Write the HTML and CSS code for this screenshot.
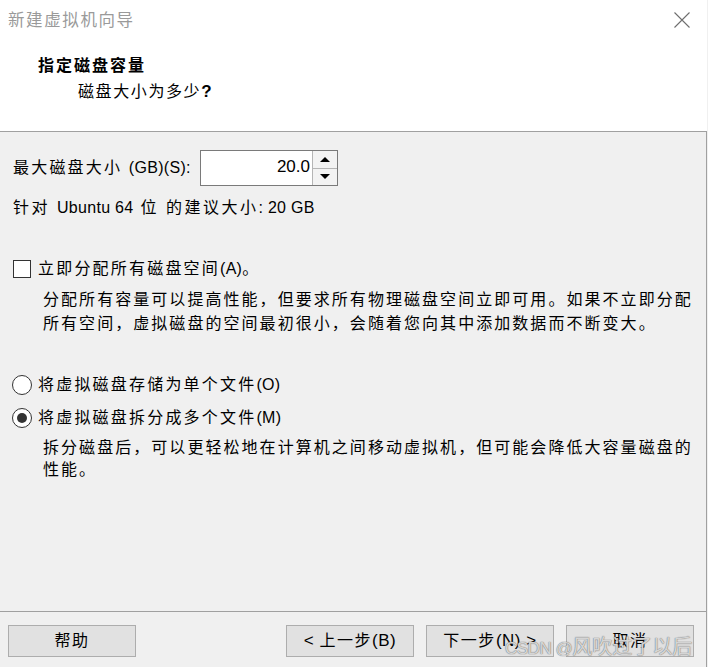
FILE: index.html
```html
<!DOCTYPE html>
<html lang="zh-CN">
<head>
<meta charset="utf-8">
<title>新建虚拟机向导</title>
<link rel="stylesheet" href="styles.css">
</head>
<body>
<div class="window">
  <header class="head">
    <div class="titlebar">
      <span class="title">新建虚拟机向导</span>
      <svg class="close" width="16" height="16" viewBox="0 0 16 16"><path d="M0.5 0.5 L15.5 15.5 M15.5 0.5 L0.5 15.5" stroke="#6e6e6e" stroke-width="1.1" fill="none"/></svg>
    </div>
    <div class="h1">指定磁盘容量</div>
    <div class="h2">磁盘大小为多少<span class="en">?</span></div>
  </header>

  <main class="content">
    <div class="size-row">
      <span class="label">最大磁盘大小 <span class="en">(GB)(S):</span></span>
      <div class="spin">
        <div class="spin-value">20.0</div>
        <div class="spin-btns">
          <div class="spin-btn"><span class="tri-up"></span></div>
          <div class="spin-btn"><span class="tri-down"></span></div>
        </div>
      </div>
    </div>
    <div class="rec">针对 <span class="en">Ubuntu 64</span> 位 的建议大小<span class="en">: 20 GB</span></div>

    <div class="opt check-opt">
      <span class="checkbox"></span>
      <span class="opt-text">立即分配所有磁盘空间<span class="en">(A)</span>。</span>
    </div>
    <p class="desc desc-a">分配所有容量可以提高性能，但要求所有物理磁盘空间立即可用。如果不立即分配<br>所有空间，虚拟磁盘的空间最初很小，会随着您向其中添加数据而不断变大。</p>

    <div class="opt radio-opt first">
      <span class="radio"></span>
      <span class="opt-text">将虚拟磁盘存储为单个文件<span class="en">(O)</span></span>
    </div>
    <div class="opt radio-opt second">
      <span class="radio checked"></span>
      <span class="opt-text">将虚拟磁盘拆分成多个文件<span class="en">(M)</span></span>
    </div>
    <p class="desc desc-b">拆分磁盘后，可以更轻松地在计算机之间移动虚拟机，但可能会降低大容量磁盘的<br>性能。</p>
  </main>

  <footer class="foot">
    <button class="btn"><span class="btn-label">帮助</span></button>
    <div class="nav">
      <button class="btn"><span class="btn-label"><span class="en">&lt; </span>上一步<span class="en">(B)</span></span></button>
      <button class="btn"><span class="btn-label">下一步<span class="en">(N) &gt;</span></span></button>
      <button class="btn"><span class="btn-label">取消</span></button>
    </div>
  </footer>

  <div class="watermark"><span class="wm-en">CSDN @</span>风吹过了以后</div>
</div>
</body>
</html>
```

FILE: styles.css
```css
* { box-sizing: border-box; }

html, body {
  margin: 0;
  padding: 0;
}

body {
  width: 708px;
  height: 667px;
  overflow: hidden;
  background: #f0f0f0;
  font-family: "Liberation Sans", "Noto Sans CJK SC", sans-serif;
  font-size: 16px;
  letter-spacing: 2.2px;
  color: #000;
}

.en {
  letter-spacing: 0.3px;
  font-size: 16px;
}

.window {
  position: relative;
  width: 707px;
  height: 667px;
  display: flex;
  flex-direction: column;
}

/* ---------- header ---------- */
.head {
  background: #fff;
  height: 132px;
  border-bottom: 1px solid #a0a0a0;
  flex: none;
}

.titlebar {
  height: 40px;
  display: flex;
  align-items: center;
  justify-content: space-between;
  padding: 0 17px 0 8px;
}

.title {
  color: #9a9a9a;
  line-height: 20px;
  font-size: 16.5px;
  letter-spacing: 1.6px;
}

.close { display: block; }

.h1 {
  margin-top: 16px;
  padding-left: 38px;
  line-height: 20px;
  font-weight: 700;
  letter-spacing: 2px;
}

.h2 {
  margin-top: 6px;
  padding-left: 78px;
  line-height: 20px;
  letter-spacing: 1.6px;
}

.h2 .en { font-size: 17px; font-weight: 700; }

/* ---------- content ---------- */
.content {
  flex: 1;
  border-right: 1px solid #a0a0a0;
  padding-left: 13px;
  display: flex;
  flex-direction: column;
}

.size-row {
  margin-top: 18px;
  width: 325px;
  height: 36px;
  display: flex;
  align-items: center;
  justify-content: space-between;
}

.label { line-height: 20px; }

.spin {
  width: 138px;
  height: 36px;
  display: flex;
  border: 1px solid #7a7a7a;
  background: #fff;
}

.spin-value {
  flex: 1;
  text-align: right;
  padding-right: 2px;
  font-size: 17px;
  letter-spacing: 0;
  line-height: 32px;
}

.spin-btns {
  width: 25px;
  display: flex;
  flex-direction: column;
  border-left: 1px solid #b5b5b5;
}

.spin-btn {
  flex: 1;
  display: flex;
  align-items: center;
  justify-content: center;
  background: #f3f3f3;
}

.spin-btn + .spin-btn { border-top: 1px solid #b5b5b5; }

.tri-up, .tri-down {
  width: 0;
  height: 0;
  border-left: 5px solid transparent;
  border-right: 5px solid transparent;
}
.tri-up { border-bottom: 5px solid #000; }
.tri-down { border-top: 5px solid #000; }

.rec {
  margin-top: 12px;
  line-height: 20px;
  letter-spacing: 2.5px;
}

.opt {
  display: flex;
  align-items: center;
  height: 20px;
}

.check-opt { margin-top: 41px; }
.radio-opt.first { margin-top: 39px; }
.radio-opt.second { margin-top: 13px; }

.checkbox {
  width: 18px;
  height: 18px;
  border: 1px solid #333;
  background: #fff;
  margin-right: 7px;
  flex: none;
}

.radio {
  width: 20px;
  height: 20px;
  border: 1px solid #333;
  border-radius: 50%;
  background: #fff;
  margin-left: -1px;
  margin-right: 6px;
  flex: none;
  display: flex;
  align-items: center;
  justify-content: center;
}

.radio.checked::after {
  content: "";
  width: 10px;
  height: 10px;
  border-radius: 50%;
  background: #333;
}

.opt-text { line-height: 20px; white-space: nowrap; }

.desc {
  margin: 9px 0 0 30px;
  white-space: nowrap;
}

.desc-a { line-height: 24px; letter-spacing: 2.05px; }
.desc-b { line-height: 22px; letter-spacing: 2.05px; }

/* ---------- footer ---------- */
.foot {
  flex: none;
  height: 56px;
  border-top: 1px solid #a0a0a0;
  border-right: 1px solid #a0a0a0;
  display: flex;
  align-items: flex-start;
  padding: 13px 12px 0 8px;
}

.nav {
  margin-left: auto;
  display: flex;
  gap: 12px;
}

.btn {
  width: 128px;
  height: 32px;
  background: #e1e1e1;
  border: 1px solid #adadad;
  font-family: inherit;
  font-size: 16px;
  letter-spacing: 1.5px;
  color: #000;
  padding: 0;
  text-align: center;
}

.btn-label {
  display: inline-block;
  line-height: 30px;
  white-space: nowrap;
}

.btn .en { font-size: 17px; letter-spacing: 0.5px; }

/* ---------- watermark overlay ---------- */
.watermark {
  position: absolute;
  left: 505px;
  top: 635px;
  font-size: 20px;
  line-height: 24px;
  letter-spacing: 0;
  color: rgba(255, 255, 255, 0.7);
  text-shadow: 0 0 1px #777, 0 0 1px #777;
  white-space: nowrap;
}

.wm-en {
  font-size: 17px;
  letter-spacing: -0.5px;
}
```
